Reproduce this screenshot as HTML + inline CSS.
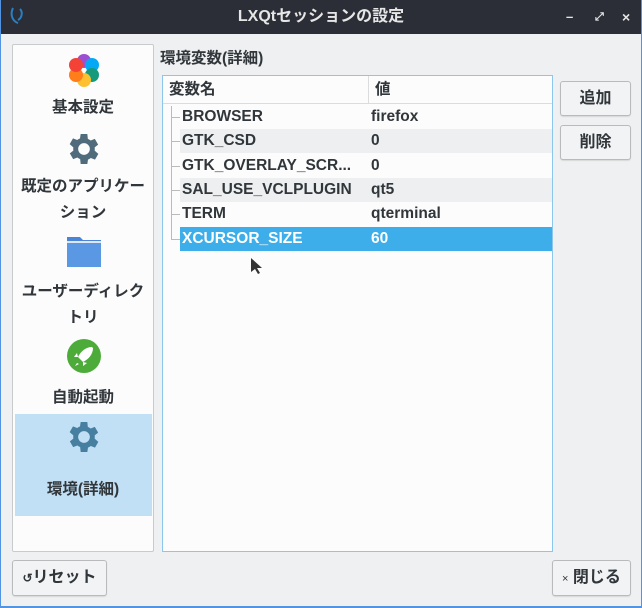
<!DOCTYPE html>
<html><head><meta charset="utf-8"><style>
*{margin:0;padding:0;box-sizing:border-box}
body{width:642px;height:608px;background:#5294e2;font-family:"Liberation Sans","Noto Sans CJK JP",sans-serif;font-weight:bold;color:#31363b;position:relative;overflow:hidden}
.win{position:absolute;left:1px;top:0;width:640px;height:606px;background:#eff0f1}
.title{position:absolute;left:0;top:0;width:640px;height:34px;background:#2b2e36;color:#e6e6e6;font-size:16px;font-weight:bold;text-align:center;line-height:34px}
.side{position:absolute;left:11px;top:44px;width:142px;height:508px;background:#fcfcfc;border:1px solid #c8cacc;border-radius:2px}
.item{position:absolute;left:2px;width:136px;text-align:center;font-size:15.5px;line-height:26px}
.tbl{position:absolute;left:161px;top:75px;width:391px;height:477px;background:#fcfcfc;border:1px solid #8cc6ea}
.hdr{position:absolute;left:0;top:0;width:389px;height:28px;border-bottom:1px solid #dcdcdc;font-size:15.5px;line-height:28px}
.row{position:absolute;left:17px;width:372px;height:24px;font-size:15.5px;line-height:24px}
.row span{position:absolute}
.btn{position:absolute;background:#f2f3f4;border:1px solid #b8babc;border-radius:3px;font-size:16px;text-align:center;box-shadow:0 1px 1px rgba(0,0,0,.1)}
.stub{position:absolute;left:8px;width:9px;height:1px;background:#bbb}
</style></head><body>
<div class="win">
<div class="title">LXQtセッションの設定
<svg style="position:absolute;left:8px;top:6px" width="16" height="20"><path d="M4 2 C1 8 3 15 9 17 M11 3 C14 6 13 12 9 14" stroke="#2a7fc0" stroke-width="2" fill="none"/></svg>
<span style="position:absolute;left:565px;top:0;font-size:13px">–</span>
<span style="position:absolute;left:594px;top:0;font-size:11px">⤢</span>
<span style="position:absolute;left:621px;top:0;font-size:14px">×</span>
</div>
<div class="side">
<svg style="position:absolute;left:53px;top:7px" width="36" height="36"><circle cx="18" cy="9" r="7" fill="#9c4fd1"/><circle cx="26" cy="13" r="7" fill="#03a9f4"/><circle cx="26" cy="23" r="7" fill="#179a7c"/><circle cx="18" cy="28" r="7" fill="#fdc02f"/><circle cx="10" cy="23" r="7" fill="#ff7d1a"/><circle cx="10" cy="13" r="7" fill="#f44336"/></svg>
<div class="item" style="top:50px">基本設定</div>
<svg style="position:absolute;left:51px;top:84px" width="40" height="40" viewBox="0 0 24 24"><path fill="#4f6b7c" d="M19.4 13a7.5 7.5 0 0 0 0-2l2.1-1.6-2-3.5-2.5 1a7 7 0 0 0-1.7-1L15 3h-4l-.4 2.6a7 7 0 0 0-1.7 1l-2.5-1-2 3.5L6.6 11a7.5 7.5 0 0 0 0 2l-2.1 1.6 2 3.5 2.5-1a7 7 0 0 0 1.7 1L11 21h4l.4-2.6a7 7 0 0 0 1.7-1l2.5 1 2-3.5zM13 15.5a3.5 3.5 0 1 1 0-7 3.5 3.5 0 0 1 0 7z" transform="translate(-1 0)"/></svg>
<div class="item" style="top:129px">既定のアプリケー<br>ション</div>
<svg style="position:absolute;left:53px;top:189px" width="36" height="34"><path d="M1 3h13l3 3h18v27H1z" fill="#4a86d8"/><rect x="1" y="8" width="34" height="25" fill="#5a98e4"/><rect x="1" y="7" width="34" height="2" fill="#dfe8f2"/></svg>
<div class="item" style="top:234px">ユーザーディレク<br>トリ</div>
<svg style="position:absolute;left:53px;top:293px" width="36" height="36"><circle cx="18" cy="18" r="17" fill="#4dab3a"/><path d="M26 9 C20 9 15 13 12 19 L17 24 C23 21 27 16 27 10Z M12 19 L8 19 L11 15 Z M17 24 L17 28 L21 25Z M11 25 L9 28 L13 26Z" fill="#fff"/></svg>
<div class="item" style="top:340px">自動起動</div>
<div style="position:absolute;left:2px;top:369px;width:137px;height:102px;background:#c1e0f5"></div>
<svg style="position:absolute;left:51px;top:372px" width="40" height="40" viewBox="0 0 24 24"><path fill="#467f9f" d="M19.4 13a7.5 7.5 0 0 0 0-2l2.1-1.6-2-3.5-2.5 1a7 7 0 0 0-1.7-1L15 3h-4l-.4 2.6a7 7 0 0 0-1.7 1l-2.5-1-2 3.5L6.6 11a7.5 7.5 0 0 0 0 2l-2.1 1.6 2 3.5 2.5-1a7 7 0 0 0 1.7 1L11 21h4l.4-2.6a7 7 0 0 0 1.7-1l2.5 1 2-3.5zM13 15.5a3.5 3.5 0 1 1 0-7 3.5 3.5 0 0 1 0 7z" transform="translate(-1 0)"/></svg>
<div class="item" style="top:432px">環境(詳細)</div>
</div>
<div style="position:absolute;left:159px;top:46px;font-size:15.5px">環境変数(詳細)</div>
<div class="tbl">
<div class="hdr"><span style="position:absolute;left:6px">変数名</span><span style="position:absolute;left:205px;top:0;height:28px;border-left:1px solid #dcdcdc;padding-left:6px">値</span></div>
<div style="position:absolute;left:8px;top:30px;width:1px;height:133px;background:#bbb"></div>
<div class="stub" style="top:41px"></div><div class="stub" style="top:65px"></div><div class="stub" style="top:90px"></div><div class="stub" style="top:114px"></div><div class="stub" style="top:138px"></div><div class="stub" style="top:163px"></div>
<div class="row" style="top:29px"><span style="left:2px">BROWSER</span><span style="left:191px">firefox</span></div>
<div class="row" style="top:53px;background:#eeeff0"><span style="left:2px">GTK_CSD</span><span style="left:191px">0</span></div>
<div class="row" style="top:78px"><span style="left:2px">GTK_OVERLAY_SCR...</span><span style="left:191px">0</span></div>
<div class="row" style="top:102px;background:#eeeff0"><span style="left:2px">SAL_USE_VCLPLUGIN</span><span style="left:191px">qt5</span></div>
<div class="row" style="top:126px"><span style="left:2px">TERM</span><span style="left:191px">qterminal</span></div>
<div class="row" style="top:151px;background:#3daee9;color:#fff"><span style="left:2px">XCURSOR_SIZE</span><span style="left:191px">60</span></div>
<svg style="position:absolute;left:87px;top:181px" width="12" height="18"><path d="M1 1v14l4-3 3 5 2-1-3-5h5z" fill="#333"/></svg>
</div>
<div class="btn" style="left:559px;top:81px;width:71px;height:35px;line-height:33px">追加</div>
<div class="btn" style="left:559px;top:125px;width:71px;height:35px;line-height:33px">削除</div>
<div class="btn" style="left:11px;top:560px;width:95px;height:36px;line-height:34px"><span style="font-size:12px">↺</span>リセット</div>
<div class="btn" style="left:551px;top:560px;width:79px;height:36px;line-height:34px"><span style="font-size:11px;font-weight:normal">×</span> 閉じる</div>
</div>
</body></html>
